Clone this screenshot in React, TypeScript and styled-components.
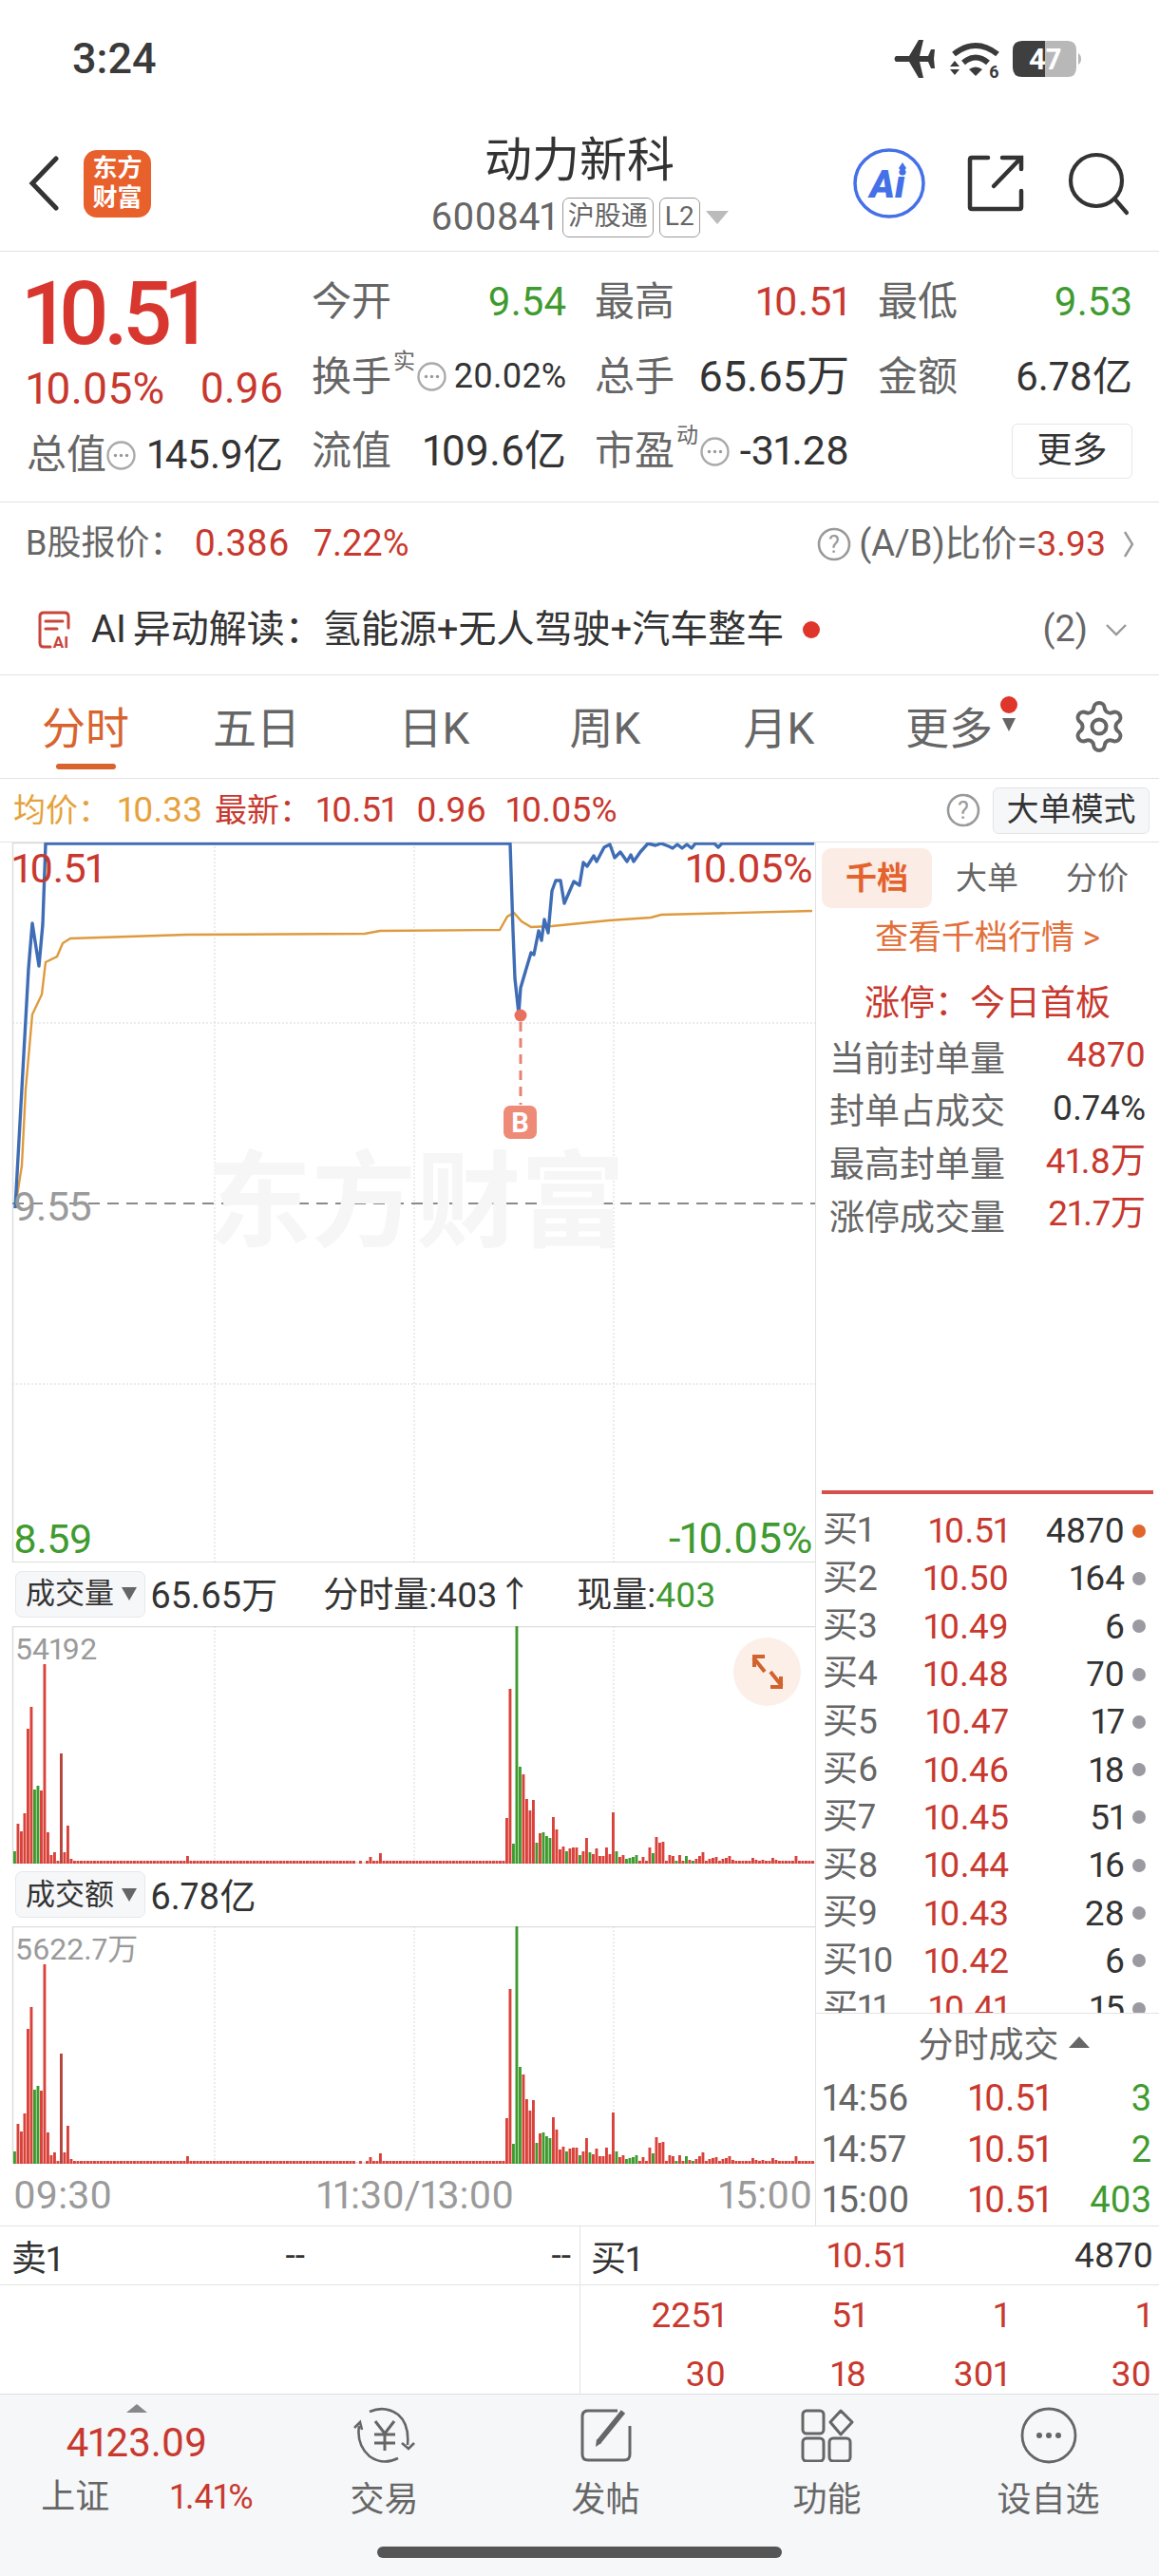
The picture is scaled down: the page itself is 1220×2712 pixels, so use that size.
import styled, { createGlobalStyle } from "styled-components"
import { Settings } from "lucide-react"

const red = "#C8382E"
const green = "#3F9B2F"
const dark = "#333"
const gray = "#666"
const muted = "#9a9a9a"
const orange = "#D9632E"
const line = "#e2e2e2"

type Tone = "red" | "green" | "dark" | "gray" | "muted" | "orange" | "gold"

const tones: Record<Tone, string> = {
    red,
    green,
    dark,
    gray,
    muted,
    orange,
    gold: "#E5A23C"
}

const blueLine = "16,1272 30,1020 34,972 41,1017 45,973 48,888 537,888 540,980 542,1030 546,1067 548,1040 553,1023 559,1003 562,1005 567,980 570,990 573,968 577,982 581,938 585,927 590,927 594,951 604,928 610,932 614,908 618,912 625,901 628,907 636,892 642,889 647,903 653,897 660,907 664,900 667,907 674,897 682,888 690,890 696,888 704,891 708,893 713,889 718,893 723,889 728,893 732,888 752,888 756,892 760,888 857,888"
const goldLine = "16,1272 23,1227 27,1147 34,1068 44,1047 48,1013 60,1007 66,993 74,988 197,984 384,983 400,980 526,979 534,965 541,961 549,970 559,976 581,975 641,969 685,966 696,963 855,959"

const flat = (count: number) => Array.from({ length: count }, () => 3)

// one entry per minute, negative is a falling (green) bar
const bars = [
    -13, 42, 34, 53, 142, 165, -78, -82, 77, 210, 33, 9, 12, 3, 116, 12, 40, 5,
    ...flat(34), 8, ...flat(50), 0, 3, 0, 3, 7, 3, 3, 11, ...flat(37),
    48, 184, -21, -250, -102, 94, 68, 56, 67, -22, 32, -33, -29, -27, 49, 36, 15, 18, -13, 16, 17, 17, -9, 13, 27, -12, 10, 16, 8, 8,
    17, 10, 54, -13, 7, 9, -5, -6, -7, -9, 3, 7, 3, 17, -11, 28, 22, 23, 3, 9, 8, -3, 9, 3, -8, 4, -3, 5, 8, 12,
    3, 5, 6, 7, 3, 5, 6, 8, 4, 3, 3, 3, 3, 3, 6, 4, 3, 4, 3, 3, 6, 4, 3, 3, 3, 3, 3, 8, 3, 3, 3, 3, 3
]

const buyRows = [
    ["买1", "10.51", "4870"],
    ["买2", "10.50", "164"],
    ["买3", "10.49", "6"],
    ["买4", "10.48", "70"],
    ["买5", "10.47", "17"],
    ["买6", "10.46", "18"],
    ["买7", "10.45", "51"],
    ["买8", "10.44", "16"],
    ["买9", "10.43", "28"],
    ["买10", "10.42", "6"],
    ["买11", "10.41", "15"]
]

const GlobalStyle = createGlobalStyle`
    html, body {
        margin: 0;
        padding: 0;
        background: #fff;
    }
    body {
        font-family: Roboto, "Noto Sans CJK SC", sans-serif;
        font-variant-numeric: proportional-nums;
        color: ${dark};
    }
    * {
        box-sizing: border-box;
    }
`

const Page = styled.div`
    width: 1220px;
    height: 2712px;
    overflow: hidden;
    display: flex;
    flex-direction: column;
`

const Text = styled.span<{ $tone?: Tone; $size?: number; $tight?: number }>`
    color: ${p => tones[p.$tone ?? "dark"]};
    font-size: ${p => p.$size ?? 40}px;
    letter-spacing: ${p => p.$tight ?? 0}px;
    white-space: nowrap;
    line-height: 1.2;
`

const StatusBar = styled.div`
    height: 130px;
    display: flex;
    justify-content: space-between;
    padding: 42px 80px 0 76px;
`

const Clock = styled.div`
    font-size: 45px;
    font-weight: 500;
    line-height: 40px;
    color: #3a3a3a;
`

const NavBar = styled.div`
    height: 135px;
    display: grid;
    grid-template-columns: 1fr auto 1fr;
    border-bottom: 1px solid ${line};
`

const NavLeft = styled.div`
    display: flex;
    align-items: center;
    gap: 26px;
    padding: 0 0 8px 30px;
`

const Logo = styled.div`
    width: 71px;
    height: 71px;
    border-radius: 14px;
    background: #E8602C;
    color: #fff;
    font-size: 26px;
    font-weight: 700;
    line-height: 31px;
    text-align: center;
    padding-top: 4px;
`

const NavCenter = styled.div`
    display: flex;
    flex-direction: column;
    align-items: center;
    padding-top: 14px;
`

const NavTitle = styled.div`
    font-size: 50px;
    line-height: 50px;
    color: #333;
`

const NavSub = styled.div`
    display: flex;
    align-items: center;
    gap: 6px;
    margin-top: 14px;
    color: ${gray};
    font-size: 40px;
    line-height: 42px;
`

const Tag = styled.span`
    height: 42px;
    padding: 0 5px;
    border: 1.5px solid #999;
    border-radius: 7px;
    font-size: 28px;
    line-height: 38px;
    color: ${gray};
`

const NavRight = styled.div`
    display: flex;
    align-items: center;
    justify-content: flex-end;
    gap: 44px;
    padding: 0 30px 8px 0;
`

const Quote = styled.div`
    height: 264px;
    display: flex;
    gap: 30px;
    padding: 14px 28px 0 28px;
    border-bottom: 1px solid ${line};
`

const QuoteLeft = styled.div`
    width: 270px;
    display: flex;
    flex-direction: column;
`

const BigPrice = styled.div`
    height: 94px;
    margin-left: -3px;
    padding-top: 4px;
    font-size: 92px;
    line-height: 96px;
    font-weight: 500;
    color: #D8372F;
    letter-spacing: -6px;
`

const ChangeRow = styled.div`
    height: 61px;
    display: flex;
    justify-content: space-between;
    align-items: center;
    margin-top: 6px;
`

const MetricRow = styled.div`
    height: 78px;
    display: flex;
    align-items: center;
    justify-content: space-between;
`

const QuoteGrid = styled.div`
    flex: 1;
    display: grid;
    grid-template-columns: 268px 268px 268px;
    grid-auto-rows: 78.5px;
    column-gap: 30px;
`

const Cell = styled.div`
    display: flex;
    align-items: center;
    justify-content: space-between;
`

const CellLabel = styled.div`
    display: flex;
    align-items: center;
    color: ${gray};
    font-size: 42px;
    line-height: 48px;
`

const Super = styled.sup`
    align-self: flex-start;
    font-size: 23px;
    line-height: 24px;
    margin: -4px 2px 0 2px;
    color: ${gray};
`

const MoreButton = styled.button`
    width: 127px;
    height: 58px;
    padding: 0;
    background: #fff;
    border: 1.5px solid #e6e6e6;
    border-radius: 6px;
    font: inherit;
    font-size: 37px;
    line-height: 50px;
    color: ${dark};
`

const BRow = styled.div`
    height: 87px;
    display: flex;
    justify-content: space-between;
    align-items: center;
    padding: 0 26px 0 27px;
`

const InlineGroup = styled.div<{ $gap?: number }>`
    display: flex;
    align-items: center;
    gap: ${p => p.$gap ?? 0}px;
`

const BLabel = styled(Text)`
    margin-right: -15px;
`

const RowChevron = styled.span`
    display: flex;
    margin-left: 10px;
`

const AiRow = styled.div`
    height: 95px;
    display: flex;
    justify-content: space-between;
    align-items: center;
    padding: 0 33px 0 40px;
    border-bottom: 1px solid ${line};
`

const Alert = styled.span`
    width: 18px;
    height: 18px;
    border-radius: 50%;
    background: #E0352B;
`

const Tabs = styled.div`
    height: 109px;
    display: grid;
    grid-template-columns: 180px 180px 194px 166px 200px 158px 1fr;
    align-items: center;
    border-bottom: 1px solid ${line};
`

const Tab = styled.div<{ $active?: boolean }>`
    position: relative;
    text-align: center;
    font-size: 46px;
    line-height: 50px;
    margin-top: 3px;
    color: ${p => (p.$active ? orange : gray)};

    ${p => p.$active && `
        &::after {
            content: "";
            position: absolute;
            left: 59px;
            width: 63px;
            bottom: -18px;
            height: 6px;
            border-radius: 3px;
            background: ${orange};
        }
    `}
`

const MoreMark = styled.span`
    position: absolute;
    right: 7px;
    top: -9px;
    width: 18px;
    height: 18px;
    border-radius: 50%;
    background: #E0352B;

    &::after {
        content: "";
        position: absolute;
        left: 2px;
        top: 23px;
        border-left: 7px solid transparent;
        border-right: 7px solid transparent;
        border-top: 14px solid #666;
    }
`

const GearCell = styled.div`
    display: flex;
    justify-content: flex-end;
    padding-right: 33px;
    color: ${gray};
`

const InfoRow = styled.div`
    height: 67px;
    display: flex;
    justify-content: space-between;
    align-items: center;
    padding: 0 10px 0 14px;
    border-bottom: 1px solid ${line};
`

const ModeButton = styled.div`
    width: 165px;
    height: 49px;
    background: #f6f7f9;
    border: 1px solid #e2e4e8;
    border-radius: 6px;
    font-size: 34px;
    line-height: 45px;
    text-align: center;
    color: ${dark};
`

const Main = styled.div`
    height: 1456px;
    display: flex;
`

const ChartColumn = styled.div`
    width: 858px;
    display: flex;
    flex-direction: column;
`

const PriceChart = styled.div`
    position: relative;
    height: 758px;
`

const ChartSvg = styled.svg`
    display: block;
`

const Watermark = styled.div`
    position: absolute;
    left: 218px;
    top: 320px;
    font-size: 110px;
    line-height: 120px;
    font-weight: 700;
    color: #f6f6f6;
    white-space: nowrap;
`

const ChartLabel = styled.div<{ $tone: Tone; $left?: number; $right?: number; $top: number; $size?: number }>`
    position: absolute;
    top: ${p => p.$top}px;
    ${p => (p.$left !== undefined ? `left: ${p.$left}px;` : "")}
    ${p => (p.$right !== undefined ? `right: ${p.$right}px;` : "")}
    color: ${p => tones[p.$tone]};
    font-size: ${p => p.$size ?? 43}px;
    line-height: 48px;
    letter-spacing: -0.5px;
`

const IndicatorBar = styled.div`
    height: 67px;
    display: flex;
    align-items: center;
    padding: 0 0 0 16px;
    font-size: 38px;
    line-height: 42px;
    color: ${dark};
`

const IndicatorText = styled.span`
    padding-top: 4px;
    white-space: nowrap;
`

const IndicatorExtras = styled(InlineGroup)`
    margin-left: 48px;
    padding-top: 4px;
`

const Select = styled.div`
    width: 137px;
    height: 49px;
    display: flex;
    align-items: center;
    gap: 8px;
    padding-left: 10px;
    margin-right: 5px;
    background: #f6f7f9;
    border: 1px solid #e6e8ec;
    border-radius: 7px;
    font-size: 31px;
    line-height: 44px;

    &::after {
        content: "";
        border-left: 8px solid transparent;
        border-right: 8px solid transparent;
        border-top: 14px solid #666;
    }
`

const BarPanel = styled.div`
    position: relative;
    height: 250px;
`

const BarValue = styled.div`
    position: absolute;
    left: 16px;
    top: 6px;
    font-size: 32px;
    line-height: 36px;
    color: ${muted};
`

const ExpandBadge = styled.div`
    position: absolute;
    left: 772px;
    top: 12px;
    width: 71px;
    height: 72px;
    display: flex;
    align-items: center;
    justify-content: center;
    border-radius: 50%;
    background: #FBEFE8;
`

const TimeAxis = styled.div`
    height: 65px;
    display: flex;
    justify-content: space-between;
    align-items: center;
    padding: 0 3px 0 14px;
    color: ${muted};
    font-size: 41px;
`

const SidePanel = styled.div`
    width: 362px;
    display: flex;
    flex-direction: column;
    border-left: 1px solid ${line};
`

const SideTabs = styled.div`
    height: 78px;
    display: grid;
    grid-template-columns: 116px 116px 116px;
    align-items: start;
    padding: 6px 0 0 6px;
    column-gap: 0;
`

const SideTab = styled.div<{ $active?: boolean }>`
    height: 63px;
    border-radius: 10px;
    text-align: center;
    font-size: 33px;
    line-height: 63px;
    font-weight: ${p => (p.$active ? 700 : 400)};
    color: ${p => (p.$active ? "#E4622C" : gray)};
    background: ${p => (p.$active ? "#FBEDE6" : "transparent")};
`

const DepthLink = styled.div`
    height: 46px;
    text-align: center;
    font-size: 35px;
    line-height: 46px;
    color: #E2703A;
`

const LimitTitle = styled.div`
    height: 54px;
    margin-top: 19px;
    text-align: center;
    font-size: 37px;
    line-height: 54px;
    color: ${red};
`

const LimitRow = styled.div`
    height: 56px;
    display: flex;
    justify-content: space-between;
    align-items: center;
    padding: 0 14px 0 14px;
    font-size: 37px;
    color: ${gray};
`

const RedRule = styled.div`
    height: 5px;
    margin: 262px 6px 0 6px;
    background: #D4504C;
`

const DepthList = styled.div`
    height: 549px;
    padding-top: 13px;
    overflow: hidden;
    border-bottom: 1px solid ${line};
`

const DepthRow = styled.div`
    height: 50.3px;
    display: grid;
    grid-template-columns: 84px 112px 122px 1fr;
    align-items: center;
    padding-left: 7px;
    font-size: 37px;
`

const RightText = styled.div<{ $tone: Tone }>`
    text-align: right;
    color: ${p => tones[p.$tone]};
    white-space: nowrap;
`

const DepthDot = styled.span<{ $first?: boolean }>`
    width: 14px;
    height: 14px;
    margin-left: 8px;
    border-radius: 50%;
    background: ${p => (p.$first ? "#E0662C" : "#9a9aa0")};
`

const TradesHead = styled.div`
    height: 60px;
    display: flex;
    align-items: center;
    justify-content: center;
    gap: 10px;
    padding-left: 34px;
    color: ${gray};
    font-size: 37px;

    &::after {
        content: "";
        border-left: 11px solid transparent;
        border-right: 11px solid transparent;
        border-bottom: 12px solid #666;
    }
`

const TradeRows = styled.div`
    padding-top: 3px;
`

const TradeRow = styled.div`
    height: 53.5px;
    display: grid;
    grid-template-columns: 134px 106px 106px;
    align-items: center;
    padding-left: 7px;
    font-size: 38px;
    color: ${gray};
`

const Book = styled.div`
    height: 177px;
    overflow: hidden;
    border-top: 1px solid ${line};
`

const BookRow = styled.div`
    height: 62px;
    display: grid;
    grid-template-columns: 610px 610px;
    border-bottom: 1px solid ${line};
`

const BookCell = styled.div<{ $right?: boolean }>`
    display: grid;
    align-items: center;
    grid-template-columns: ${p => (p.$right ? "60px 273px 259px" : "60px 249px 280px")};
    padding-left: ${p => (p.$right ? 11 : 12)}px;
    font-size: 37px;
    ${p => (p.$right ? `border-left: 1px solid ${line};` : "")}
`

const BookDepth = styled.div`
    display: grid;
    grid-template-columns: 610px 610px;
`

const BookNumbers = styled.div`
    display: grid;
    grid-template-columns: 153px 148px 150px 150px;
    grid-auto-rows: 62px;
    align-items: center;
    border-left: 1px solid ${line};
    font-size: 37px;
    height: 120px;
`

const Footer = styled.div`
    flex: 1;
    display: flex;
    flex-direction: column;
    background: #f6f7f9;
    border-top: 1px solid #dcdde0;
`

const FooterTabs = styled.div`
    height: 160px;
    display: grid;
    grid-template-columns: 288px repeat(4, 233px);
`

const IndexBlock = styled.div`
    display: flex;
    flex-direction: column;
    align-items: center;
    padding-top: 10px;

    &::before {
        content: "";
        border-left: 11px solid transparent;
        border-right: 11px solid transparent;
        border-bottom: 9px solid #888;
    }
`

const IndexValue = styled.div`
    margin-top: 12px;
    font-size: 42px;
    line-height: 40px;
    color: ${red};
`

const IndexRow = styled.div`
    margin: 16px 0 0 22px;
    display: flex;
    gap: 64px;
    align-items: center;
    font-size: 36px;
    line-height: 44px;
`

const FooterItem = styled.div`
    display: flex;
    flex-direction: column;
    align-items: center;
    padding-top: 13px;
    gap: 18px;
    color: ${gray};
    font-size: 36px;
    line-height: 40px;
`

const FooterIcon = styled.div`
    height: 60px;
    display: flex;
    align-items: center;
`

const HomeBar = styled.div`
    width: 426px;
    height: 12px;
    margin: 0 auto;
    border-radius: 6px;
    background: #555;
`

const StatusIcons = () => (
    <svg width="200" height="42" viewBox="0 0 200 42">
        <path d="M3 17H17L27 0H32L28 17H37L40 10H44L43 20L44 30H40L37 23H28L32 40H27L17 23H3Q0 20 3 17Z" fill="#3a3a3a" />
        <path d="M64 15Q87 -3 110 15M74 24Q87 13 100 24" fill="none" stroke="#3a3a3a" strokeWidth="6" />
        <path d="M80 31Q87 26 94 31L87 38Z" fill="#3a3a3a" />
        <path d="M65 22L70 28H60ZM60 31H70L65 37Z" fill="#3a3a3a" />
        <text x="101" y="40" fontSize="18" fontWeight="700" fill="#3a3a3a">6</text>
        <path d="M160 1H136Q126 1 126 11V29Q126 39 136 39H160Z" fill="#3f3f3f" />
        <path d="M160 1H184Q193 1 193 11V29Q193 39 184 39H160Z" fill="#b8b8b8" />
        <path d="M195 14Q198 16 198 20Q198 24 195 26Z" fill="#b8b8b8" />
        <text x="160" y="31" fontSize="31" fontWeight="700" fill="#fff" textAnchor="middle">47</text>
    </svg>
)

const BackIcon = () => (
    <svg width="32" height="58" viewBox="0 0 32 58">
        <path d="M29 3L4 29L29 55" fill="none" stroke="#333" strokeWidth="5" strokeLinecap="round" />
    </svg>
)

const AiIcon = () => (
    <svg width="76" height="74" viewBox="0 0 76 74">
        <ellipse cx="38" cy="37" rx="36" ry="35" fill="none" stroke="#4470E8" strokeWidth="3.5" />
        <text x="36" y="52" fontSize="40" fontWeight="900" fontStyle="italic" fill="#4470E8" textAnchor="middle">Ai</text>
        <path d="M52 15L56 21L52 26L48 21Z" fill="#4470E8" />
    </svg>
)

const ShareIcon = () => (
    <svg width="60" height="60" viewBox="0 0 60 60">
        <path d="M22 3H5Q3 3 3 5V55Q3 57 5 57H55Q57 57 57 55V38M37 3H57V15M28 33L56 4" fill="none" stroke="#333" strokeWidth="4.5" strokeLinecap="round" />
    </svg>
)

const SearchIcon = () => (
    <svg width="68" height="68" viewBox="0 0 68 68">
        <circle cx="32" cy="31" r="27" fill="none" stroke="#333" strokeWidth="4.2" />
        <path d="M51 50L64 65" stroke="#333" strokeWidth="4.2" strokeLinecap="round" />
    </svg>
)

const DotCircle = () => (
    <svg width="31" height="31" viewBox="0 0 31 31">
        <circle cx="15.5" cy="15.5" r="14" fill="none" stroke="#aaa" strokeWidth="2.4" />
        <circle cx="9.5" cy="15.5" r="1.7" fill="#999" />
        <circle cx="15.5" cy="15.5" r="1.7" fill="#999" />
        <circle cx="21.5" cy="15.5" r="1.7" fill="#999" />
    </svg>
)

const HelpIcon = () => (
    <svg width="36" height="36" viewBox="0 0 36 36">
        <circle cx="18" cy="18" r="16" fill="none" stroke="#999" strokeWidth="2.6" />
        <text x="18" y="27" fontSize="25" fill="#999" textAnchor="middle">?</text>
    </svg>
)

const Chevron = ({ down }: { down?: boolean }) => (
    <svg width={down ? 24 : 12} height={down ? 14 : 30} viewBox={down ? "0 0 24 14" : "0 0 12 30"}>
        <path d={down ? "M2 2L12 12L22 2" : "M2 2L10 15L2 28"} fill="none" stroke="#999" strokeWidth="2.4" />
    </svg>
)

const ReportIcon = () => (
    <svg width="36" height="40" viewBox="0 0 36 40">
        <path d="M13 38H6Q2 38 2 34V6Q2 2 6 2H28Q32 2 32 6V18" fill="none" stroke="#C9453B" strokeWidth="3" strokeLinecap="round" />
        <path d="M8 11H26M8 19H20" stroke="#C9453B" strokeWidth="3" strokeLinecap="round" />
        <text x="24" y="39" fontSize="17" fontWeight="700" fill="#C9453B" textAnchor="middle">AI</text>
    </svg>
)

const ChartGrid = ({ height, top = 0 }: { height: number; top?: number }) => (
    <>
        <path d={`M13.5 ${top}V${top + height}`} stroke="#ddd" strokeWidth="1.5" />
        <path d={`M13 ${top + 0.5}H858`} stroke="#ddd" strokeWidth="1.5" />
        {[226, 436, 646].map(x => (
            <path key={x} d={`M${x} ${top}V${top + height}`} stroke="#d8d8d8" strokeWidth="1" strokeDasharray="2 2" />
        ))}
    </>
)

const PriceDrawing = () => (
    <ChartSvg width="858" height="758" viewBox="0 887 858 758">
        <ChartGrid height={758} top={887} />
        <path d="M13 1077H858M13 1457H858" stroke="#d8d8d8" strokeWidth="1" strokeDasharray="2 2" />
        <path d="M13 1267H858" stroke="#8a8a8a" strokeWidth="2" strokeDasharray="12 8" />
        <path d="M13 1645H858" stroke="#ddd" strokeWidth="2" />
        <polyline points={goldLine} fill="none" stroke="#DE9A3E" strokeWidth="2.4" />
        <polyline points={blueLine} fill="none" stroke="#3F6DB5" strokeWidth="3.4" strokeLinejoin="round" />
        <path d="M548 1076V1163" stroke="#E88272" strokeWidth="3" strokeDasharray="10 7" />
        <circle cx="548" cy="1069" r="6.5" fill="#E8705F" />
        <rect x="530" y="1164" width="35" height="35" rx="7" fill="#EE8A78" />
        <text x="547.5" y="1192" fontSize="29" fontWeight="700" fill="#fff" textAnchor="middle">B</text>
    </ChartSvg>
)

const VolumeBars = () => (
    <ChartSvg width="858" height="250" viewBox="0 0 858 250">
        <ChartGrid height={250} />
        <path d="M13 249H858" stroke="#ddd" strokeWidth="1.5" />
        {bars.map((value, index) => (
            <rect
                key={index}
                x={14 + index * 3.5}
                y={250 - Math.abs(value)}
                width={2.9}
                height={Math.abs(value)}
                fill={value < 0 ? "#3F9B2F" : index === 14 ? "#B5443C" : "#D9423A"}
            />
        ))}
    </ChartSvg>
)

const ExpandIcon = () => (
    <svg width="40" height="40" viewBox="0 0 40 40">
        <path d="M6 15V4H17M5 5L17 20M34 25V36H23M35 35L23 20" fill="none" stroke="#D2622E" strokeWidth="4" />
    </svg>
)

const TradeIcon = () => (
    <svg width="68" height="60" viewBox="0 0 68 60">
        <path d="M18 5Q34 -2 48 8Q60 18 58 40M48 54Q32 62 18 52Q4 40 7 20" fill="none" stroke="#666" strokeWidth="2.6" />
        <path d="M2 22L8 16L10 24M52 38L59 44L65 38" fill="none" stroke="#666" strokeWidth="2.6" />
        <path d="M24 15L34 28L44 15M34 28V46M23 29H45M23 38H45" fill="none" stroke="#666" strokeWidth="3" />
    </svg>
)

const PostIcon = () => (
    <svg width="56" height="58" viewBox="0 0 56 58">
        <path d="M40 3H9Q3 3 3 9V49Q3 55 9 55H47Q53 55 53 49V19" fill="none" stroke="#666" strokeWidth="3" />
        <path d="M20 36L46 4" stroke="#666" strokeWidth="5.5" />
        <path d="M17 41L18 33L23 37Z" fill="#666" />
    </svg>
)

const ToolsIcon = () => (
    <svg width="56" height="56" viewBox="0 0 56 56">
        <rect x="2" y="2" width="22" height="24" rx="4" fill="none" stroke="#666" strokeWidth="3" />
        <path d="M42 2L54 14L42 27L31 14Z" fill="none" stroke="#666" strokeWidth="3" strokeLinejoin="round" />
        <rect x="2" y="31" width="22" height="24" rx="4" fill="none" stroke="#666" strokeWidth="3" />
        <rect x="30" y="31" width="22" height="24" rx="4" fill="none" stroke="#666" strokeWidth="3" />
    </svg>
)

const WatchIcon = () => (
    <svg width="60" height="60" viewBox="0 0 60 60">
        <circle cx="30" cy="30" r="28" fill="none" stroke="#666" strokeWidth="2.8" />
        <circle cx="20" cy="30" r="3" fill="#666" />
        <circle cx="30" cy="30" r="3" fill="#666" />
        <circle cx="40" cy="30" r="3" fill="#666" />
    </svg>
)

export default function App() {
    return (
        <Page>
            <GlobalStyle />
            <StatusBar>
                <Clock>3:24</Clock>
                <StatusIcons />
            </StatusBar>

            <NavBar>
                <NavLeft>
                    <BackIcon />
                    <Logo>东方<br />财富</Logo>
                </NavLeft>
                <NavCenter>
                    <NavTitle>动力新科</NavTitle>
                    <NavSub>
                        600841
                        <Tag>沪股通</Tag>
                        <Tag>L2</Tag>
                        <svg width="24" height="14" viewBox="0 0 24 14">
                            <path d="M0 0H24L12 14Z" fill="#bbb" />
                        </svg>
                    </NavSub>
                </NavCenter>
                <NavRight>
                    <AiIcon />
                    <ShareIcon />
                    <SearchIcon />
                </NavRight>
            </NavBar>

            <Quote>
                <QuoteLeft>
                    <BigPrice>10.51</BigPrice>
                    <ChangeRow>
                        <Text $tone="red" $size={46}>10.05%</Text>
                        <Text $tone="red" $size={44}>0.96</Text>
                    </ChangeRow>
                    <MetricRow>
                        <CellLabel>总值<DotCircle /></CellLabel>
                        <Text $size={42}>145.9亿</Text>
                    </MetricRow>
                </QuoteLeft>
                <QuoteGrid>
                    <Cell><CellLabel>今开</CellLabel><Text $tone="green" $size={42}>9.54</Text></Cell>
                    <Cell><CellLabel>最高</CellLabel><Text $tone="red" $size={43}>10.51</Text></Cell>
                    <Cell><CellLabel>最低</CellLabel><Text $tone="green" $size={42}>9.53</Text></Cell>
                    <Cell>
                        <CellLabel>换手<Super>实</Super><DotCircle /></CellLabel>
                        <Text $size={36}>20.02%</Text>
                    </Cell>
                    <Cell><CellLabel>总手</CellLabel><Text $size={45}>65.65万</Text></Cell>
                    <Cell><CellLabel>金额</CellLabel><Text $size={42}>6.78亿</Text></Cell>
                    <Cell><CellLabel>流值</CellLabel><Text $size={44}>109.6亿</Text></Cell>
                    <Cell>
                        <CellLabel>市盈<Super>动</Super><DotCircle /></CellLabel>
                        <Text $size={43}>-31.28</Text>
                    </Cell>
                    <Cell><span /><MoreButton>更多</MoreButton></Cell>
                </QuoteGrid>
            </Quote>

            <BRow>
                <InlineGroup $gap={26}>
                    <BLabel $tone="gray" $size={36}>B股报价：</BLabel>
                    <Text $tone="red" $size={39}>0.386</Text>
                    <Text $tone="red" $size={38}>7.22%</Text>
                </InlineGroup>
                <InlineGroup $gap={8}>
                    <HelpIcon />
                    <span>
                        <Text $tone="gray" $size={38}>(A/B)比价=</Text>
                        <Text $tone="red" $size={37}>3.93</Text>
                    </span>
                    <RowChevron><Chevron /></RowChevron>
                </InlineGroup>
            </BRow>

            <AiRow>
                <InlineGroup $gap={20}>
                    <ReportIcon />
                    <Text $size={40}>AI{"\u2006"}异动解读：氢能源+无人驾驶+汽车整车</Text>
                    <Alert />
                </InlineGroup>
                <InlineGroup $gap={18}>
                    <Text $tone="gray" $size={38}>(2)</Text>
                    <Chevron down />
                </InlineGroup>
            </AiRow>

            <Tabs>
                <Tab $active>分时</Tab>
                <Tab>五日</Tab>
                <Tab>日K</Tab>
                <Tab>周K</Tab>
                <Tab>月K</Tab>
                <Tab>更多<MoreMark /></Tab>
                <GearCell><Settings size={60} strokeWidth={1.6} /></GearCell>
            </Tabs>

            <InfoRow>
                <InlineGroup $gap={13}>
                    <InlineGroup $gap={8}>
                        <Text $tone="gold" $size={34}>均价：</Text>
                        <Text $tone="gold" $size={37}>10.33</Text>
                    </InlineGroup>
                    <InlineGroup $gap={21}>
                        <InlineGroup $gap={5}>
                            <Text $tone="red" $size={34}>最新：</Text>
                            <Text $tone="red" $size={37}>10.51</Text>
                        </InlineGroup>
                        <Text $tone="red" $size={37}>0.96</Text>
                        <Text $tone="red" $size={37}>10.05%</Text>
                    </InlineGroup>
                </InlineGroup>
                <InlineGroup $gap={13}>
                    <HelpIcon />
                    <ModeButton>大单模式</ModeButton>
                </InlineGroup>
            </InfoRow>

            <Main>
                <ChartColumn>
                    <PriceChart>
                        <Watermark>东方财富</Watermark>
                        <PriceDrawing />
                        <ChartLabel $tone="red" $left={13} $top={3}>10.51</ChartLabel>
                        <ChartLabel $tone="red" $right={3} $top={3}>10.05%</ChartLabel>
                        <ChartLabel $tone="muted" $left={14} $top={359}>9.55</ChartLabel>
                        <ChartLabel $tone="green" $left={14} $top={709}>8.59</ChartLabel>
                        <ChartLabel $tone="green" $right={3} $top={709} $size={45}>-10.05%</ChartLabel>
                    </PriceChart>
                    <IndicatorBar>
                        <Select>成交量</Select>
                        <IndicatorText>65.65万</IndicatorText>
                        <IndicatorExtras $gap={47}>
                            <Text $size={37}>分时量:403↑</Text>
                            <span>
                                <Text $size={37}>现量:</Text>
                                <Text $size={37} $tone="green">403</Text>
                            </span>
                        </IndicatorExtras>
                    </IndicatorBar>
                    <BarPanel>
                        <VolumeBars />
                        <BarValue>54192</BarValue>
                        <ExpandBadge><ExpandIcon /></ExpandBadge>
                    </BarPanel>
                    <IndicatorBar>
                        <Select>成交额</Select>
                        <IndicatorText>6.78亿</IndicatorText>
                    </IndicatorBar>
                    <BarPanel>
                        <VolumeBars />
                        <BarValue>5622.7万</BarValue>
                    </BarPanel>
                    <TimeAxis>
                        <span>09:30</span>
                        <span>11:30/13:00</span>
                        <span>15:00</span>
                    </TimeAxis>
                </ChartColumn>

                <SidePanel>
                    <SideTabs>
                        <SideTab $active>千档</SideTab>
                        <SideTab>大单</SideTab>
                        <SideTab>分价</SideTab>
                    </SideTabs>
                    <DepthLink>查看千档行情 &gt;</DepthLink>
                    <LimitTitle>涨停：今日首板</LimitTitle>
                    <LimitRow>当前封单量<Text $tone="red" $size={37}>4870</Text></LimitRow>
                    <LimitRow>封单占成交<Text $size={37}>0.74%</Text></LimitRow>
                    <LimitRow>最高封单量<Text $tone="red" $size={37}>41.8万</Text></LimitRow>
                    <LimitRow>涨停成交量<Text $tone="red" $size={37}>21.7万</Text></LimitRow>
                    <RedRule />
                    <DepthList>
                        {buyRows.map(([label, price, size], index) => (
                            <DepthRow key={label}>
                                <Text $tone="gray" $size={37}>{label}</Text>
                                <RightText $tone="red">{price}</RightText>
                                <RightText $tone="dark">{size}</RightText>
                                <DepthDot $first={index === 0} />
                            </DepthRow>
                        ))}
                    </DepthList>
                    <TradesHead>分时成交</TradesHead>
                    <TradeRows>
                        <TradeRow>14:56<RightText $tone="red">10.51</RightText><RightText $tone="green">3</RightText></TradeRow>
                        <TradeRow>14:57<RightText $tone="red">10.51</RightText><RightText $tone="green">2</RightText></TradeRow>
                        <TradeRow>15:00<RightText $tone="red">10.51</RightText><RightText $tone="green">403</RightText></TradeRow>
                    </TradeRows>
                </SidePanel>
            </Main>

            <Book>
                <BookRow>
                    <BookCell>
                        <span>卖1</span>
                        <RightText $tone="dark">--</RightText>
                        <RightText $tone="dark">--</RightText>
                    </BookCell>
                    <BookCell $right>
                        <span>买1</span>
                        <RightText $tone="red">10.51</RightText>
                        <RightText $tone="dark">4870</RightText>
                    </BookCell>
                </BookRow>
                <BookDepth>
                    <span />
                    <BookNumbers>
                        {["2251", "51", "1", "1", "30", "18", "301", "30"].map((value, index) => (
                            <RightText key={index} $tone="red">{value}</RightText>
                        ))}
                    </BookNumbers>
                </BookDepth>
            </Book>

            <Footer>
                <FooterTabs>
                    <IndexBlock>
                        <IndexValue>4123.09</IndexValue>
                        <IndexRow>
                            <Text $tone="gray" $size={36}>上证</Text>
                            <Text $tone="red" $size={36}>1.41%</Text>
                        </IndexRow>
                    </IndexBlock>
                    <FooterItem><FooterIcon><TradeIcon /></FooterIcon>交易</FooterItem>
                    <FooterItem><FooterIcon><PostIcon /></FooterIcon>发帖</FooterItem>
                    <FooterItem><FooterIcon><ToolsIcon /></FooterIcon>功能</FooterItem>
                    <FooterItem><FooterIcon><WatchIcon /></FooterIcon>设自选</FooterItem>
                </FooterTabs>
                <HomeBar />
            </Footer>
        </Page>
    )
}
